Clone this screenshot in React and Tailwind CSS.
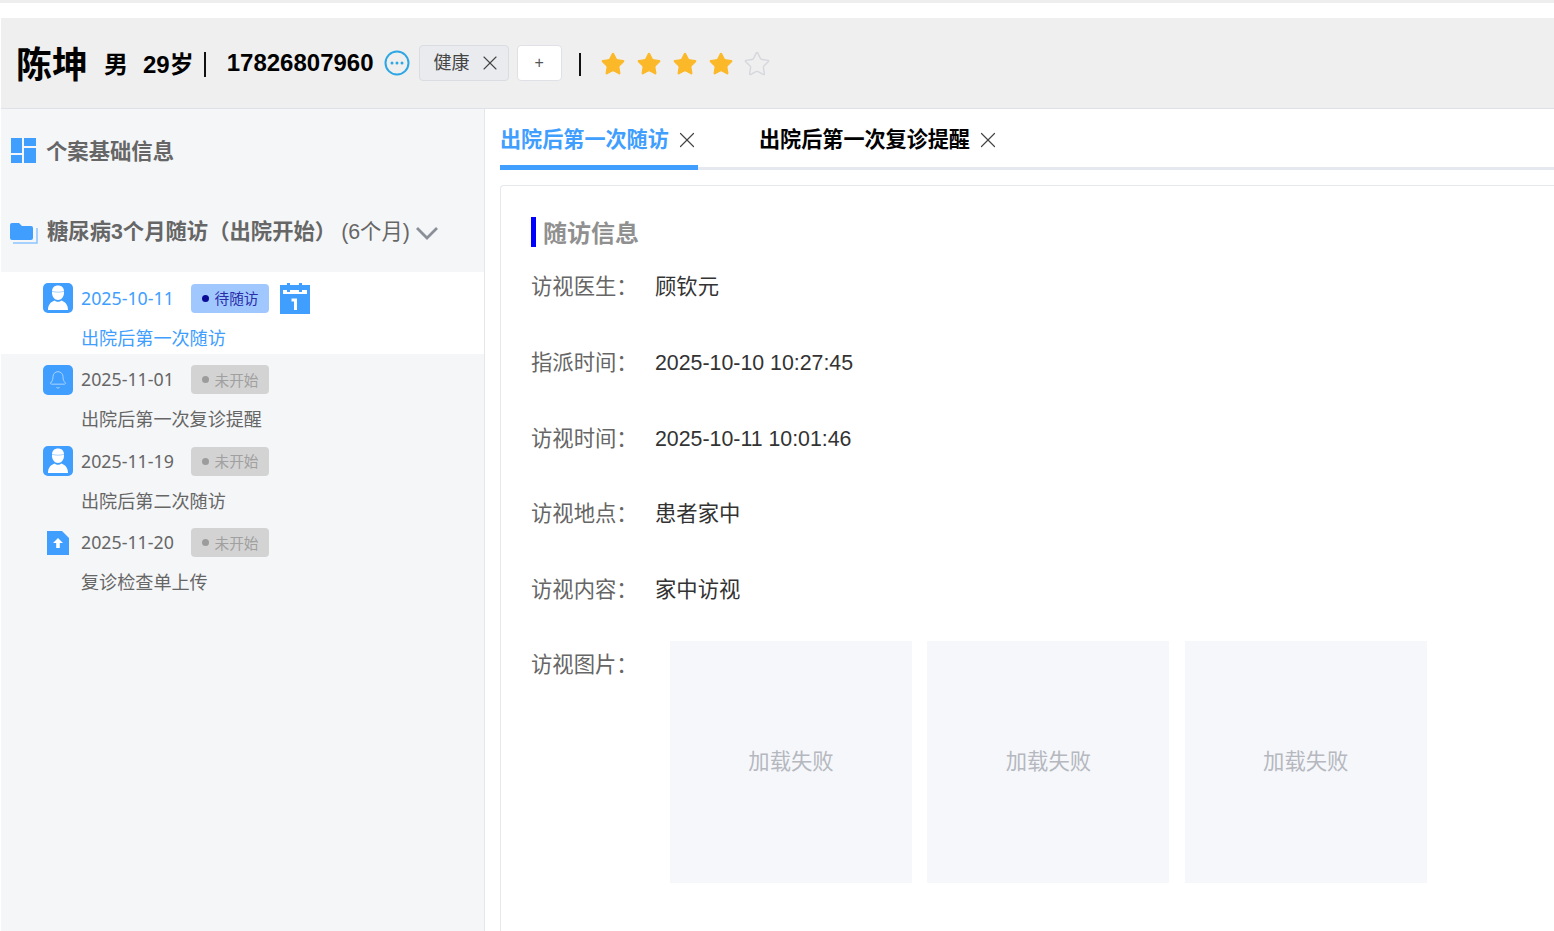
import { X, Bell, Star } from "lucide-react";

const CJK = "font-['Liberation_Sans','Noto_Sans_CJK_SC',sans-serif]";
const ROUND = "font-['Noto_Sans','Noto_Sans_CJK_SC',sans-serif]";

function Nurse() {
  return (
    <span className="w-[30px] h-[30px] rounded-[5px] bg-[#409eff] flex items-center justify-center shrink-0">
      <svg width="30" height="30" viewBox="0 0 30 30" fill="none">
        <path d="M9 8.500C9 4.500 11.500 2.500 15 2.500s6 2 6 6v1.500c0 3.500-2.500 7-6 7s-6-3.500-6-7z" fill="#fff" />
        <path d="M9 8.300c4 1.200 8 1.200 12 0" stroke="#a9d3ff" strokeWidth="1" />
        <path d="M5 27c0-5 2.500-8 6.500-9.500 1 .9 2.200 1.300 3.500 1.300s2.500-.4 3.500-1.300C22.500 19 25 22 25 27z" fill="#fff" />
      </svg>
    </span>
  );
}

function BellBox() {
  return (
    <span className="w-[30px] h-[30px] rounded-[5px] bg-[#409eff] flex items-center justify-center shrink-0">
      <Bell size={20} strokeWidth={1.2} color="#a9d3ff" />
    </span>
  );
}

function UploadBox() {
  return (
    <span className="w-[30px] h-[30px] flex items-center justify-center shrink-0">
      <svg width="24" height="26" viewBox="0 0 24 26">
        <path d="M1 1h15l7 7v17H1z" fill="#409eff" />
        <path d="M12 8l5 5h-3.200v5h-3.600v-5H7z" fill="#fff" />
      </svg>
    </span>
  );
}

function Calendar() {
  return (
    <svg width="30" height="31" viewBox="0 0 30 31" className="ml-[11px]">
      <path d="M0 2h7V0h3v2h9V0h3v2h8v29H0z" fill="#409eff" />
      <path d="M3 7h4v2h3V7h9v2h3V7h5v4H3z" fill="#fff" />
      <path d="M11.500 15.500H17V27h-3v-8.500h-2.500z" fill="#fff" />
    </svg>
  );
}

function Status({ active, text }) {
  return (
    <span
      className={`ml-[17px] w-[78px] h-[29px] rounded-[4px] flex items-center justify-center gap-[6px] text-[14.670px] ${
        active ? "bg-[#a0c8ff] text-[#2a2ea8]" : "bg-[#d3d3d3] text-[#a0a0a0]"
      }`}
    >
      <span className={`w-[7px] h-[7px] rounded-full ${active ? "bg-[#0c0c96]" : "bg-[#9c9c9c]"}`} />
      {text}
    </span>
  );
}

const visits = [
  { date: "2025-10-11", title: "出院后第一次随访", icon: <Nurse />, active: true, status: "待随访" },
  { date: "2025-11-01", title: "出院后第一次复诊提醒", icon: <BellBox />, status: "未开始" },
  { date: "2025-11-19", title: "出院后第二次随访", icon: <Nurse />, status: "未开始" },
  { date: "2025-11-20", title: "复诊检查单上传", icon: <UploadBox />, status: "未开始" },
];

const rows = [
  { label: "访视医生\uFF1A", value: "顾钦元" },
  { label: "指派时间\uFF1A", value: "2025-10-10 10:27:45" },
  { label: "访视时间\uFF1A", value: "2025-10-11 10:01:46" },
  { label: "访视地点\uFF1A", value: "患者家中" },
  { label: "访视内容\uFF1A", value: "家中访视" },
];

function FilledStar() {
  return <Star size={26} fill="#fbb829" color="#fbb829" strokeWidth={1} />;
}

function TabClose() {
  return <X size={26} strokeWidth={1.100} className="ml-[5px] text-[#444] shrink-0" />;
}

export default function App() {
  return (
    <div className={`h-[931px] w-[1554px] overflow-hidden bg-white ${CJK}`}>
      <div className="h-[3px] bg-[#eeeeee]" />
      <div className="h-[15px]" />
      <header className="h-[91px] ml-px bg-[#efefef] border-b border-[#dfe1e8] flex items-center pl-[15px] text-black">
        <span className="text-[36px] font-bold leading-none mt-[6px]">陈坤</span>
        <span className="ml-[16px] text-[24px] font-bold mt-[3px]">男</span>
        <span className="ml-[15px] text-[24px] font-bold mt-[3px]">29岁</span>
        <span className="ml-[10px] w-[2px] h-[25px] bg-[#111] mt-[3px]" />
        <span className="ml-[21px] text-[24px] font-bold">17826807960</span>
        <svg width="26" height="26" viewBox="0 0 26 26" className="ml-[10px]">
          <circle cx="13" cy="13" r="11.500" fill="none" stroke="#2da7e4" strokeWidth="2" />
          <circle cx="8" cy="13" r="1.500" fill="#2da7e4" />
          <circle cx="13" cy="13" r="1.500" fill="#2da7e4" />
          <circle cx="18" cy="13" r="1.500" fill="#2da7e4" />
        </svg>
        <span className="ml-[9px] w-[90px] h-[36px] rounded-[4px] bg-[#e9ebee] border border-[#d9dce1] flex items-center pl-[14px] text-[18px] text-[#444]">
          健康
          <X size={24} strokeWidth={1.100} className="ml-[8px] text-[#444]" />
        </span>
        <span className="ml-[8px] w-[45px] h-[36px] rounded-[4px] bg-white border border-[#dfe1e6] flex items-center justify-center text-[16px] text-[#555]">
          +
        </span>
        <span className="ml-[17px] w-[2px] h-[23px] bg-[#111] mt-[3px]" />
        <span className="ml-[19px] mt-[1px] flex items-center gap-[10.300px]">
          <FilledStar />
          <FilledStar />
          <FilledStar />
          <FilledStar />
          <Star size={28} color="#d5d7dc" strokeWidth={1.200} className="-ml-[2px]" />
        </span>
      </header>
      <div className="flex h-[822px] ml-px">
        <aside className="w-[484px] shrink-0 bg-[#f5f6f8] border-r border-[#e4e6eb]">
          <div className="h-[84px] flex items-center pl-[10px] text-[#666] text-[21.330px] font-bold">
            <svg width="25" height="25" viewBox="0 0 25 25" className="mr-[10px] -mt-[1px]">
              <rect x="0" y="0" width="11" height="15" fill="#409eff" />
              <rect x="0" y="17" width="11" height="8" fill="#409eff" />
              <rect x="13" y="0" width="12" height="8" fill="#409eff" />
              <rect x="13" y="10" width="12" height="15" fill="#409eff" />
            </svg>
            <span className="mt-[3px]">个案基础信息</span>
          </div>
          <div className="h-[79px] flex items-center pl-[8px] text-[#666] text-[21.330px] font-bold whitespace-nowrap">
            <svg width="29" height="24" viewBox="0 0 29 24" className="mr-[9px]">
              <path d="M1 4a2 2 0 012-2h7l3 3h9a2 2 0 012 2v10a2 2 0 01-2 2H3a2 2 0 01-2-2z" fill="#409eff" />
              <path d="M4 22h24V7" fill="none" stroke="#8cc4ff" strokeWidth="1.500" />
            </svg>
            <span className="mt-[1px]">{"糖尿病3个月随访\uFF08出院开始\uFF09"}</span>
            <span className="ml-[5px] font-normal mt-[1px]">(6个月)</span>
            <svg width="24" height="14" viewBox="0 0 24 14" className="ml-[5px]">
              <path d="M2 2l10 10L22 2" fill="none" stroke="#8a8f98" strokeWidth="2.800" />
            </svg>
          </div>
          {visits.map((v) => (
            <div
              key={v.date}
              className={`pl-[42px] h-[81.500px] pt-[11.200px] ${v.active ? "bg-white text-[#409eff]" : "text-[#666]"} ${ROUND}`}
            >
              <div className="flex items-center h-[30px]">
                {v.icon}
                <span className="ml-[8px] w-[93px] text-[17.800px] whitespace-nowrap">{v.date}</span>
                <Status active={v.active} text={v.status} />
                {v.active && <Calendar />}
              </div>
              <div className="ml-[38px] mt-[9.500px] text-[18.100px] leading-[30px]">{v.title}</div>
            </div>
          ))}
        </aside>
        <main className="flex-1 pl-[15px] min-w-0">
          <div className="h-[61px] flex items-start border-b-[3px] border-[#e6e8ef]">
            <div className="w-[198px] h-[61px] pt-[6px] border-b-[5px] border-[#409eff] flex items-center text-[#409eff] text-[21.100px] font-bold whitespace-nowrap">
              出院后第一次随访
              <TabClose />
            </div>
            <div className="ml-[61px] h-[58px] pt-[4px] flex items-center text-black text-[21.100px] font-bold whitespace-nowrap">
              出院后第一次复诊提醒
              <TabClose />
            </div>
          </div>
          <div className="mt-[15px] border-l border-t border-[#e6e8ef] rounded-tl-[4px] pl-[30px] pt-[31px] h-[800px]">
            <div className="h-[30px] border-l-[5px] border-[#0000ff] pl-[7px] pt-[3px] text-[24px] font-bold text-[#909090] flex items-center">
              随访信息
            </div>
            {rows.map((r) => (
              <div key={r.label} className="flex h-[75.800px] pt-[25px] text-[21.330px] leading-[30px]">
                <span className="w-[124px] text-[#666]">{r.label}</span>
                <span className="text-[#333]">{r.value}</span>
              </div>
            ))}
            <div className="flex text-[21.330px] mt-[15px]">
              <span className="w-[139px] text-[#666] pt-[9px] leading-[30px]">{"访视图片\uFF1A"}</span>
              <div className="flex gap-[15.400px]">
                {[1, 2, 3].map((i) => (
                  <div key={i} className="w-[242px] h-[242px] pt-[3px] bg-[#f5f7fa] flex items-center justify-center text-[#b5b8bf]">
                    加载失败
                  </div>
                ))}
              </div>
            </div>
          </div>
        </main>
      </div>
    </div>
  );
}
